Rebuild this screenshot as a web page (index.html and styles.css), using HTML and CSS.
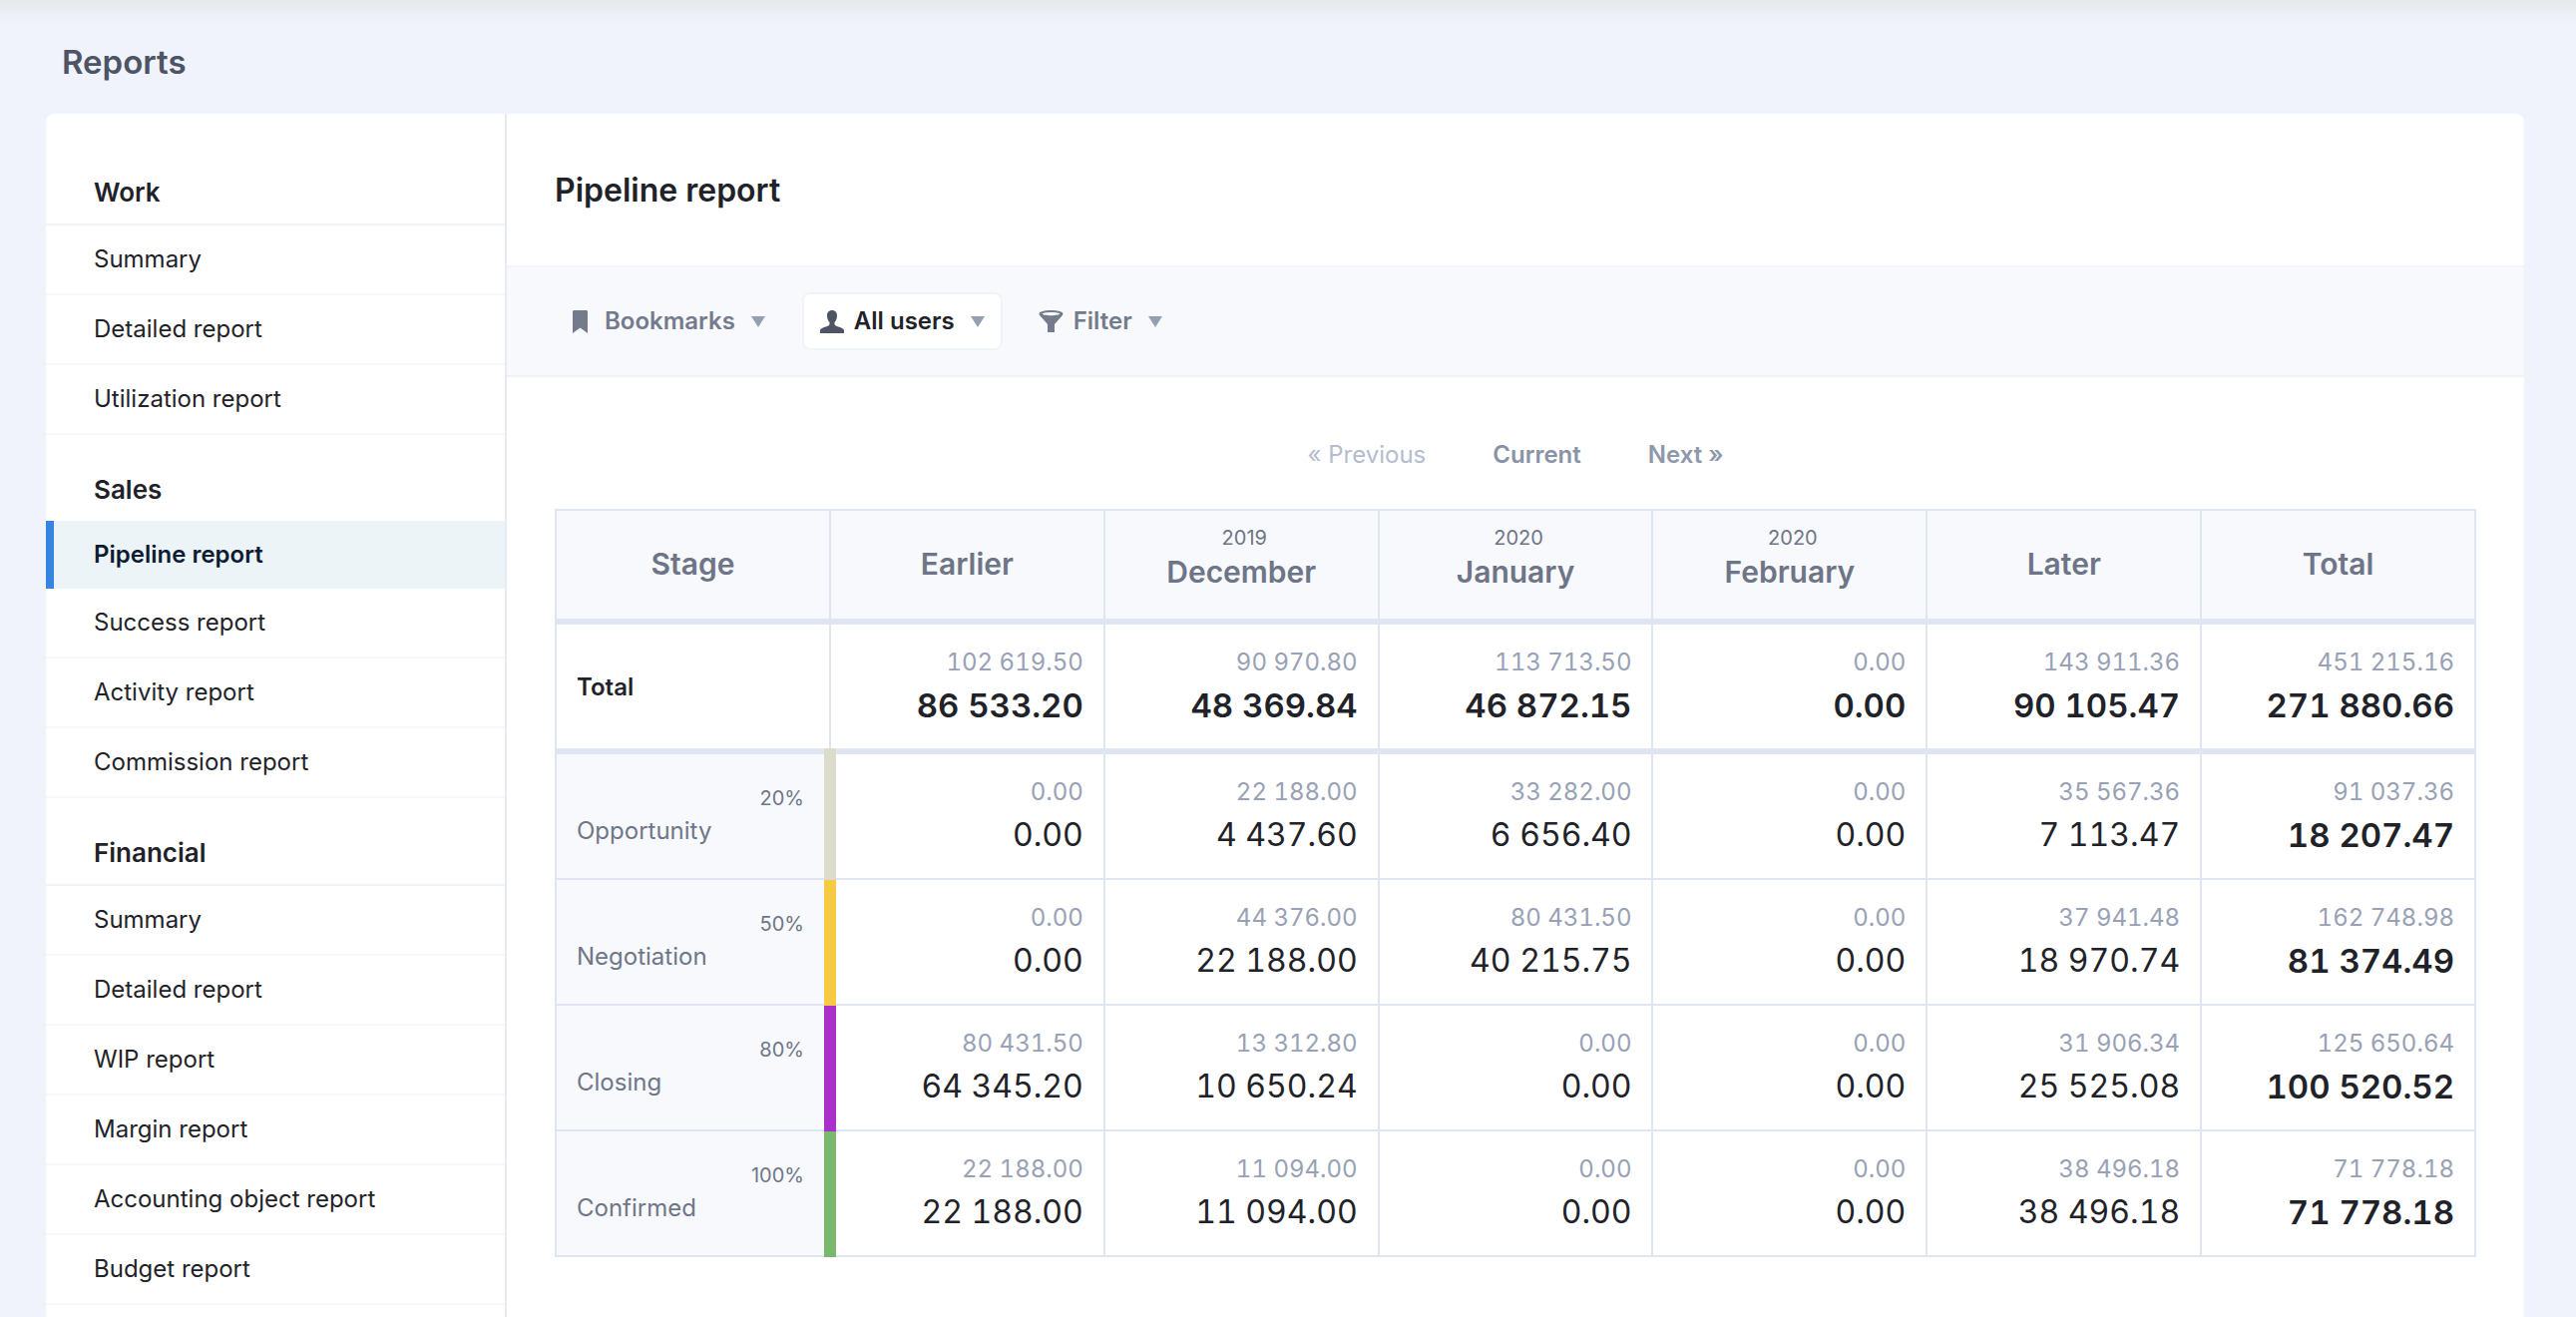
FILE: index.html
```html
<!DOCTYPE html>
<html lang="en">
<head>
<meta charset="utf-8">
<title>Reports</title>
<link rel="stylesheet" href="styles.css">
</head>
<body>
<div class="topshade"></div>
<h1 class="page-title">Reports</h1>
<div class="card">
  <nav class="sidebar">
    <section class="nav-section">
      <h2 class="nav-head">Work</h2>
      <a class="nav-item">Summary</a>
      <a class="nav-item">Detailed report</a>
      <a class="nav-item">Utilization report</a>
    </section>
    <section class="nav-section">
      <h2 class="nav-head">Sales</h2>
      <a class="nav-item active">Pipeline report</a>
      <a class="nav-item">Success report</a>
      <a class="nav-item">Activity report</a>
      <a class="nav-item">Commission report</a>
    </section>
    <section class="nav-section">
      <h2 class="nav-head">Financial</h2>
      <a class="nav-item">Summary</a>
      <a class="nav-item">Detailed report</a>
      <a class="nav-item">WIP report</a>
      <a class="nav-item">Margin report</a>
      <a class="nav-item">Accounting object report</a>
      <a class="nav-item">Budget report</a>
    </section>
  </nav>
  <main class="content">
    <header class="content-head"><h2 class="content-title">Pipeline report</h2></header>
    <div class="toolbar">
      <button class="tool">
        <svg class="ico ico-bookmark" viewBox="0 0 15 23"><path d="M0 1.500C0 .6.6 0 1.500 0h12c.9 0 1.500.6 1.500 1.500V23l-7.500-5.500L0 23z"/></svg>
        <span>Bookmarks</span><i class="caret"></i>
      </button>
      <button class="tool selected">
        <svg class="ico ico-user" viewBox="0 0 24 23"><path d="M12 0C8.600 0 7 2.400 7 5.400c0 2.600 1 5 2.500 6.600v2.200c-1 1.400-3 2-5.500 2.900C1.800 17.900 0 18.900 0 20.500V23h24v-2.500c0-1.600-1.800-2.600-4-3.400-2.500-.9-4.500-1.500-5.500-2.900V12C16 10.400 17 8 17 5.400 17 2.400 15.400 0 12 0z"/></svg>
        <span>All users</span><i class="caret"></i>
      </button>
      <button class="tool">
        <svg class="ico ico-funnel" viewBox="0 0 25 22"><path d="M12.500 0C5.900 0 .5 1.500.5 3.500c0 .6.400 1.300 1 2l7.500 8.500V22h7v-8l7.500-8.500c.6-.7 1-1.400 1-2C24.500 1.500 19.100 0 12.500 0zm0 2c4.900 0 8.800.8 8.800 1.600s-3.900 1.700-8.800 1.700-8.800-.9-8.800-1.700S7.600 2 12.500 2z"/></svg>
        <span>Filter</span><i class="caret"></i>
      </button>
    </div>
    <div class="pager">
      <a class="pager-link disabled">« Previous</a>
      <a class="pager-link current">Current</a>
      <a class="pager-link">Next »</a>
    </div>
    <table class="pipeline">
      <colgroup><col class="col-first"><col><col><col><col><col><col></colgroup>
      <thead>
        <tr>
          <th>Stage</th>
          <th>Earlier</th>
          <th class="dated"><small>2019</small>December</th>
          <th class="dated"><small>2020</small>January</th>
          <th class="dated"><small>2020</small>February</th>
          <th>Later</th>
          <th>Total</th>
        </tr>
      </thead>
      <tbody>
        <tr class="total-row">
          <td class="label-total">Total</td>
          <td><span class="sub">102 619.50</span><span class="val">86 533.20</span></td>
          <td><span class="sub">90 970.80</span><span class="val">48 369.84</span></td>
          <td><span class="sub">113 713.50</span><span class="val">46 872.15</span></td>
          <td><span class="sub">0.00</span><span class="val">0.00</span></td>
          <td><span class="sub">143 911.36</span><span class="val">90 105.47</span></td>
          <td><span class="sub">451 215.16</span><span class="val">271 880.66</span></td>
        </tr>
        <tr>
          <td class="stage"><i class="bar bar-first" style="background:#dcdccd"></i><span class="pct">20%</span><span class="name">Opportunity</span></td>
          <td><span class="sub">0.00</span><span class="val">0.00</span></td>
          <td><span class="sub">22 188.00</span><span class="val">4 437.60</span></td>
          <td><span class="sub">33 282.00</span><span class="val">6 656.40</span></td>
          <td><span class="sub">0.00</span><span class="val">0.00</span></td>
          <td><span class="sub">35 567.36</span><span class="val">7 113.47</span></td>
          <td class="sum"><span class="sub">91 037.36</span><span class="val">18 207.47</span></td>
        </tr>
        <tr>
          <td class="stage"><i class="bar" style="background:#f6ca43"></i><span class="pct">50%</span><span class="name">Negotiation</span></td>
          <td><span class="sub">0.00</span><span class="val">0.00</span></td>
          <td><span class="sub">44 376.00</span><span class="val">22 188.00</span></td>
          <td><span class="sub">80 431.50</span><span class="val">40 215.75</span></td>
          <td><span class="sub">0.00</span><span class="val">0.00</span></td>
          <td><span class="sub">37 941.48</span><span class="val">18 970.74</span></td>
          <td class="sum"><span class="sub">162 748.98</span><span class="val">81 374.49</span></td>
        </tr>
        <tr>
          <td class="stage"><i class="bar" style="background:#a931c9"></i><span class="pct">80%</span><span class="name">Closing</span></td>
          <td><span class="sub">80 431.50</span><span class="val">64 345.20</span></td>
          <td><span class="sub">13 312.80</span><span class="val">10 650.24</span></td>
          <td><span class="sub">0.00</span><span class="val">0.00</span></td>
          <td><span class="sub">0.00</span><span class="val">0.00</span></td>
          <td><span class="sub">31 906.34</span><span class="val">25 525.08</span></td>
          <td class="sum"><span class="sub">125 650.64</span><span class="val">100 520.52</span></td>
        </tr>
        <tr>
          <td class="stage"><i class="bar" style="background:#79b86d"></i><span class="pct">100%</span><span class="name">Confirmed</span></td>
          <td><span class="sub">22 188.00</span><span class="val">22 188.00</span></td>
          <td><span class="sub">11 094.00</span><span class="val">11 094.00</span></td>
          <td><span class="sub">0.00</span><span class="val">0.00</span></td>
          <td><span class="sub">0.00</span><span class="val">0.00</span></td>
          <td><span class="sub">38 496.18</span><span class="val">38 496.18</span></td>
          <td class="sum"><span class="sub">71 778.18</span><span class="val">71 778.18</span></td>
        </tr>
      </tbody>
    </table>
  </main>
</div>
</body>
</html>
```
FILE: styles.css
```css
* { box-sizing: border-box; }
html, body { margin: 0; height: 100%; }
body {
  background: #f0f3fb;
  font-family: Inter, "Liberation Sans", sans-serif;
  color: #1f2329;
  height: 1320px;
  overflow: hidden;
  display: flex;
  flex-direction: column;
  position: relative;
}
.topshade {
  position: absolute;
  top: 0; left: 0; right: 0;
  height: 28px;
  background: linear-gradient(#e8e9ec 0, #e9ebef 30%, #edf0f7 50%, #f0f3fb 100%);
}
.page-title {
  margin: 0;
  padding: 42px 0 0 62px;
  height: 114px;
  font-size: 33px;
  line-height: 40px;
  font-weight: 600;
  color: #4d5464;
  position: relative;
}
.card {
  flex: 1;
  margin: 0 52px 0 46px;
  background: #fff;
  border-radius: 8px 8px 0 0;
  display: flex;
  min-height: 0;
  overflow: hidden;
}
.sidebar {
  width: 462px;
  flex: none;
  border-right: 2px solid #e6eaf3;
  padding-top: 25px;
}
.nav-section { margin-top: 38px; }
.nav-head {
  margin: 0;
  padding: 1px 0 16px 48px;
  font-size: 26px;
  line-height: 30px;
  font-weight: 600;
  color: #1f2329;
  border-bottom: 2px solid #f0f3f9;
}
.nav-section:not(:first-child) .nav-head { padding-top: 2px; }
.nav-item {
  display: block;
  height: 70px;
  padding-left: 48px;
  font-size: 24px;
  line-height: 68px;
  color: #1f2329;
  border-bottom: 2px solid #f7f8fc;
}
.nav-item.active {
  height: 68px;
  margin-top: -2px;
  position: relative;
  padding-left: 40px;
  border-bottom: 0;
  border-left: 8px solid #3584e0;
  background: #ecf4f8;
  font-weight: 600;
  color: #0d1b33;
}
.content { flex: 1; min-width: 0; }
.content-head { height: 152px; padding: 2px 0 0 48px; display: flex; align-items: center; }
.content-title { margin: 0; font-size: 32px; line-height: 40px; font-weight: 600; color: #1f2329; }
.toolbar {
  height: 112px;
  background: #f8f9fd;
  border-top: 2px solid #f2f4f9;
  border-bottom: 2px solid #f0f3f8;
  padding: 0 0 0 48px;
  display: flex;
  align-items: center;
  gap: 19px;
}
.tool {
  height: 58px;
  padding: 0 16px;
  display: flex;
  align-items: center;
  border: 2px solid transparent;
  border-radius: 8px;
  background: none;
  font: 600 24px/30px Inter, "Liberation Sans", sans-serif;
  color: #747b8c;
}
.tool.selected { background: #fff; border-color: #f0f3fa; color: #1f2329; }
.ico { display: block; flex: none; fill: #747b8c; }
.ico-bookmark { width: 15px; height: 23px; margin-right: 17px; }
.ico-user { width: 24px; height: 23px; margin-right: 10px; fill: #4d5464; }
.ico-funnel { width: 25px; height: 22px; margin: 0 10px 0 -1px; }
.caret {
  display: block;
  margin-left: 16px;
  width: 0; height: 0;
  border-left: 7.5px solid transparent;
  border-right: 7.5px solid transparent;
  border-top: 11px solid #969fb2;
}
.pager {
  height: 132px;
  display: flex;
  justify-content: center;
  align-items: center;
  gap: 67px;
  padding-top: 22px;
  font-size: 24px;
  font-weight: 600;
  color: #8f98ab;
}
.pager-link.disabled { color: #b4bccd; font-weight: 400; }
.pager-link.current { color: #8a93a6; }
.pipeline {
  width: 1926px;
  margin-left: 48px;
  table-layout: fixed;
  border-collapse: separate;
  border-spacing: 0;
  border-top: 2px solid #dfe5f1;
}
.col-first { width: 277px; }
.pipeline th {
  height: 114px;
  padding: 0 0 2px;
  background: #f7f9fd;
  border-right: 2px solid #dfe5f1;
  border-bottom: 6px solid #dfe5f1;
  font-size: 30px;
  line-height: 54px;
  font-weight: 600;
  color: #6e7587;
  text-align: center;
}
.pipeline th.dated { padding-bottom: 0; }
.pipeline th:first-child, .pipeline td:first-child { border-left: 2px solid #dfe5f1; }
.pipeline th small {
  display: block;
  padding-left: 6px;
  font-size: 20px;
  line-height: 14px;
  font-weight: 400;
}
.pipeline td {
  height: 126px;
  padding: 22px 20px 0 0;
  vertical-align: top;
  text-align: right;
  border-right: 2px solid #dfe5f1;
  border-bottom: 2px solid #dfe5f1;
  position: relative;
}
.total-row td { height: 130px; border-bottom-width: 6px; }
.pipeline tbody .stage {
  background: #f7f9fd;
  text-align: left;
  padding: 28px 0 0 20px;
}
.pipeline tbody .label-total {
  text-align: left;
  vertical-align: middle;
  padding: 0 0 0 20px;
  font-size: 24px;
  font-weight: 600;
}
.sub, .val { font-variant-numeric: tabular-nums; }
.sub { display: block; font-size: 24px; line-height: 32px; color: #98a1b5; }
.val { display: block; margin-top: 7px; font-size: 32px; line-height: 40px; font-weight: 400; color: #1f2329; }
.total-row .val, .sum .val { font-size: 33px; font-weight: 600; }
.pct { display: block; font-size: 20px; line-height: 32px; margin-bottom: 1px; text-align: right; padding-right: 25px; color: #6f7688; }
.name { display: block; font-size: 24px; line-height: 32px; color: #6f7688; }
.bar {
  position: absolute;
  top: 0; bottom: -2px; right: -7px;
  width: 12px;
  z-index: 1;
}
.bar-first { top: -6px; }
```
